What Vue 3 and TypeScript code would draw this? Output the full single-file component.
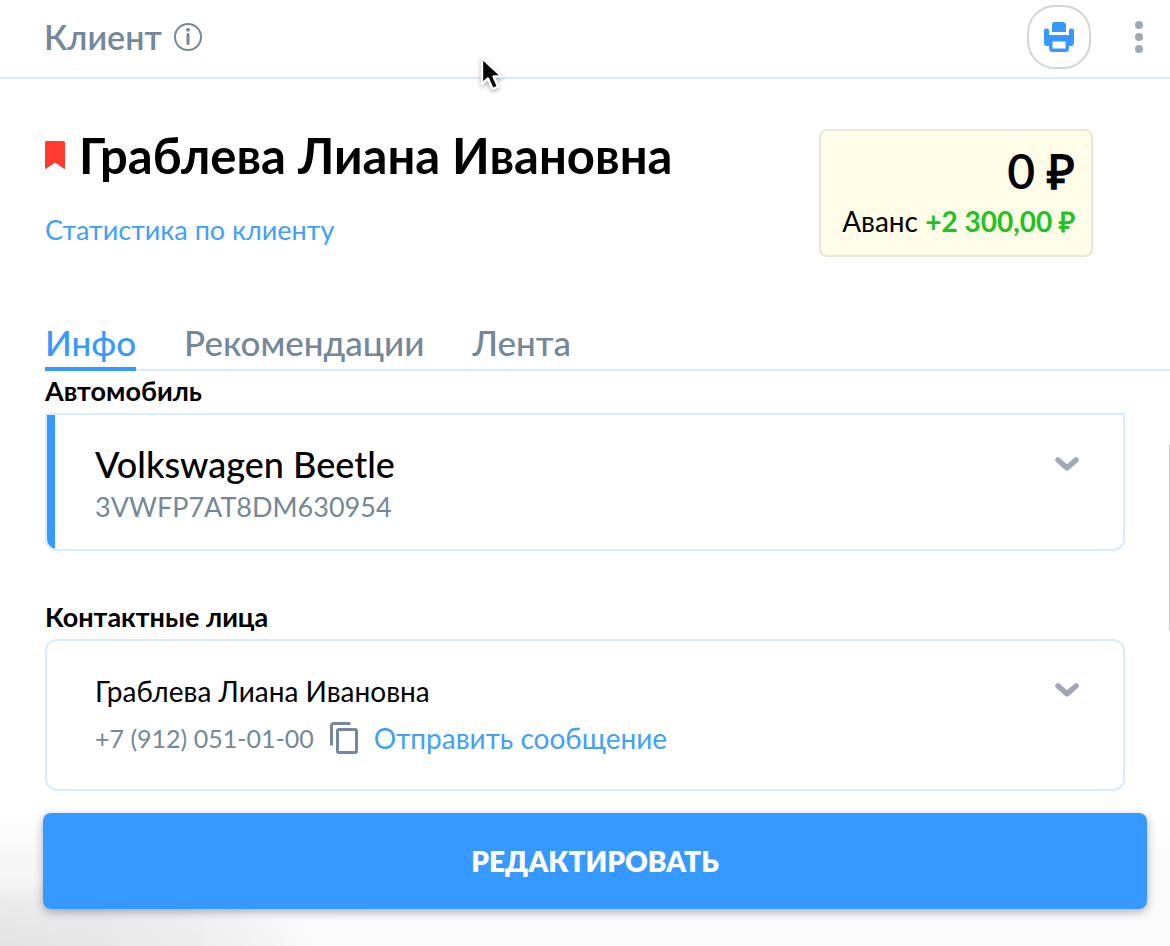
<script setup lang="ts">
import { ref } from 'vue'

interface Tab {
  id: string
  label: string
}

const tabs: Tab[] = [
  { id: 'info', label: 'Инфо' },
  { id: 'recommendations', label: 'Рекомендации' },
  { id: 'feed', label: 'Лента' },
]

const activeTab = ref('info')
const client = 'Граблева Лиана Ивановна'
const car = { name: 'Volkswagen Beetle', vin: '3VWFP7AT8DM630954' }
const phone = '+7 (912) 051-01-00'
</script>

<template>
  <div class="page">
    <header class="topbar">
      <span class="topbar-title">Клиент</span>
      <button class="icon-button" type="button" aria-label="Информация">
        <svg class="info-icon" viewBox="0 0 28 28">
          <circle cx="14" cy="14" r="13" fill="none" stroke="currentColor" stroke-width="2" />
          <circle cx="14" cy="6.8" r="1.9" fill="currentColor" />
          <path d="M14 11.500v9" stroke="currentColor" stroke-width="3" stroke-linecap="round" />
        </svg>
      </button>
      <button class="print-button" type="button" aria-label="Печать">
        <svg class="print-icon" viewBox="0 0 30 30" fill="currentColor">
          <path d="M8 10V2.500Q8 0 10.500 0H19Q20 0 20.700.7L21.400 1.400Q22 2 22 3V10Z" />
          <path fill-rule="evenodd" d="M0 8.500Q0 6.500 2 6.500H3Q5 6.500 5 8.500V13H25V8.500Q25 6.500 27 6.500H28Q30 6.500 30 8.500V21Q30 24 27 24H25V26Q25 30 21.500 30H8.500Q5 30 5 26V24H3Q0 24 0 21ZM8.500 19.500V26.500H21.500V19.500Z" />
        </svg>
      </button>
      <button class="icon-button" type="button" aria-label="Меню">
        <svg class="more-icon" viewBox="0 0 8 32" fill="currentColor">
          <circle cx="4" cy="4" r="4" />
          <circle cx="4" cy="16" r="4" />
          <circle cx="4" cy="28" r="4" />
        </svg>
      </button>
    </header>

    <main class="content">
      <section class="summary">
        <div class="person">
          <h1 class="person-name">
            <svg class="flag-icon" viewBox="0 0 20 28" aria-hidden="true">
              <path d="M2 0H18Q20 0 20 2V27Q20 28.600 18.600 27.600L10 21.500L1.400 27.600Q0 28.600 0 27V2Q0 0 2 0Z" fill="#ff3b30" />
            </svg>
            <span>{{ client }}</span>
          </h1>
          <a class="link stats-link" href="#stats">Статистика по клиенту</a>
        </div>
        <div class="balance">
          <div class="balance-total">0 ₽</div>
          <div class="balance-advance">Аванс <strong>+2 300,00 ₽</strong></div>
        </div>
      </section>

      <nav class="tabs">
        <button
          v-for="tab in tabs"
          :key="tab.id"
          type="button"
          class="tab"
          :class="{ active: tab.id === activeTab }"
          @click="activeTab = tab.id"
        >
          {{ tab.label }}
        </button>
      </nav>

      <section class="group">
        <h2 class="group-title">Автомобиль</h2>
        <div class="card car-card">
          <div class="card-body">
            <div class="car-name">{{ car.name }}</div>
            <div class="car-vin">{{ car.vin }}</div>
          </div>
          <button class="icon-button chevron" type="button" aria-label="Развернуть автомобиль">
            <svg class="chevron-icon" viewBox="0 0 24 14">
              <path d="M3 3L12 10.800L21 3" fill="none" stroke="currentColor" stroke-width="5.600" stroke-linecap="round" stroke-linejoin="round" />
            </svg>
          </button>
        </div>
      </section>

      <section class="group contacts">
        <h2 class="group-title">Контактные лица</h2>
        <div class="card contact-card">
          <div class="card-body">
            <div class="contact-name">{{ client }}</div>
            <div class="contact-row">
              <span class="phone">{{ phone }}</span>
              <button class="icon-button" type="button" aria-label="Скопировать номер">
                <svg class="copy-icon" viewBox="0 0 28 32" fill="none" stroke="currentColor" stroke-width="3">
                  <path d="M1.500 23.500V4Q1.500 1.500 4 1.500H20.500" />
                  <rect x="7.500" y="7.500" width="19" height="23" rx="1.500" />
                </svg>
              </button>
              <a class="link" href="#message">Отправить сообщение</a>
            </div>
          </div>
          <button class="icon-button chevron" type="button" aria-label="Развернуть контакт">
            <svg class="chevron-icon" viewBox="0 0 24 14">
              <path d="M3 3L12 10.800L21 3" fill="none" stroke="currentColor" stroke-width="5.600" stroke-linecap="round" stroke-linejoin="round" />
            </svg>
          </button>
        </div>
      </section>
    </main>

    <footer class="actions">
      <button class="edit-button" type="button">РЕДАКТИРОВАТЬ</button>
    </footer>

    <div class="scroll-thumb"></div>
    <svg class="pointer" viewBox="0 0 24 36" aria-hidden="true">
      <path d="M2 2V28L8 22.500L12.500 33L18 30.500L13.500 20.500H22Z" fill="#000" stroke="#fff" stroke-width="2.400" stroke-linejoin="round" />
    </svg>
  </div>
</template>

<style>
body {
  margin: 0;
  background: #fff;
}
</style>

<style scoped>
.page {
  position: relative;
  display: flex;
  flex-direction: column;
  min-height: 100vh;
  overflow: hidden;
  background: #fff;
  color: #000;
  font-family: Lato, "Open Sans", sans-serif;
  font-size: 28px;
  line-height: 36px;
}

button {
  padding: 0;
  border: 0;
  background: none;
  color: inherit;
  font: inherit;
  cursor: pointer;
}

svg {
  display: block;
}

.topbar {
  display: flex;
  align-items: center;
  height: 73px;
  padding: 0 27px 4px 44px;
  border-bottom: 2px solid #d9ecff;
  color: #748899;
}

.topbar-title {
  margin-right: 12px;
  font-family: "Lato Semibold", "Lato Medium", Lato, sans-serif;
  font-size: 34px;
  font-weight: 600;
  line-height: 44px;
}

.info-icon {
  width: 28px;
  height: 28px;
}

.print-button {
  display: grid;
  place-items: center;
  box-sizing: border-box;
  width: 64px;
  height: 64px;
  margin-left: auto;
  margin-right: 44px;
  border: 2px solid #d0d5dc;
  border-radius: 28px;
  color: #3699ff;
}

.print-icon {
  width: 30px;
  height: 30px;
}

.more-icon {
  width: 8px;
  height: 32px;
  color: #a1a9b8;
}

.content {
  padding: 50px 45px 22px;
}

.summary {
  display: flex;
  justify-content: space-between;
  align-items: flex-start;
  margin-right: 32px;
}

.person-name {
  display: flex;
  align-items: center;
  gap: 14px;
  margin: 0 0 30px;
  font-size: 49px;
  font-weight: 700;
  line-height: 52px;
}

.flag-icon {
  width: 20px;
  height: 28px;
}

.link {
  color: #429ffc;
  text-decoration: none;
}

.stats-link {
  font-size: 27px;
}

.balance {
  box-sizing: border-box;
  min-width: 274px;
  padding: 12px 16px 14px;
  border: 2px solid #e8e8d6;
  border-radius: 8px;
  background: #fffce8;
  text-align: right;
}

.balance-total {
  margin-bottom: 2px;
  font-size: 48px;
  font-weight: 600;
  line-height: 56px;
}

.balance-advance {
  line-height: 40px;
}

.balance-advance strong {
  color: #21c321;
  font-weight: 700;
}

.tabs {
  display: flex;
  gap: 48px;
  margin: 62px -45px 0 0;
  border-bottom: 2px solid #d9ecff;
}

.tab {
  margin-bottom: -2px;
  padding-bottom: 2px;
  border-bottom: 4px solid transparent;
  color: #748899;
  font-family: "Lato Medium", Lato, sans-serif;
  font-size: 35px;
  font-weight: 500;
  line-height: 46px;
}

.tab.active {
  border-color: #3699ff;
  color: #3699ff;
}

.group-title {
  margin: 0 0 2px;
  font-size: 27px;
  font-weight: 700;
  line-height: 40px;
}

.contacts {
  margin-top: 46px;
}

.card {
  display: flex;
  justify-content: space-between;
  align-items: flex-start;
  border: 2px solid #d9ecff;
  border-radius: 12px;
  overflow: hidden;
}

.car-card {
  border-radius: 0 0 12px 12px;
}

.car-card .card-body {
  padding: 26px 40px 22px;
  border-left: 8px solid #3699ff;
}

.car-name {
  font-family: "Lato Medium", Lato, sans-serif;
  font-size: 36px;
  font-weight: 500;
  line-height: 46px;
}

.car-vin {
  color: #748899;
  font-size: 27px;
  line-height: 40px;
}

.contact-card .card-body {
  padding: 28px 48px 26px;
}

.contact-name {
  line-height: 44px;
}

.contact-row {
  display: flex;
  align-items: center;
  gap: 16px;
  line-height: 50px;
}

.phone {
  color: #748899;
  font-size: 25px;
}

.copy-icon {
  width: 28px;
  height: 32px;
  color: #748899;
}

.chevron {
  margin: 42px 44px 0 0;
  color: #a1a9b8;
}

.chevron-icon {
  width: 24px;
  height: 14px;
}

.actions {
  flex: 1;
  padding: 0 23px 37px 43px;
  background:
    linear-gradient(to bottom, #fff, transparent 35%),
    radial-gradient(ellipse 320px 70px at 0 100%, rgba(0, 0, 0, 0.08), rgba(0, 0, 0, 0.05) 60%, transparent),
    linear-gradient(to right, rgba(0, 0, 0, 0.03), rgba(0, 0, 0, 0.01) 35%);
}

.edit-button {
  display: block;
  width: 100%;
  border-radius: 8px;
  background: #3699ff;
  box-shadow: 0 3px 10px rgba(20, 30, 60, 0.35);
  color: #fff;
  font-size: 28px;
  font-weight: 800;
  line-height: 96px;
}

.scroll-thumb {
  position: absolute;
  top: 445px;
  right: 0;
  width: 1px;
  height: 185px;
  background: #b9cde0;
}

.pointer {
  position: absolute;
  top: 56px;
  left: 480px;
  width: 24px;
  height: 36px;
  filter: drop-shadow(0 2px 2px rgba(0, 0, 0, 0.3));
}
</style>
